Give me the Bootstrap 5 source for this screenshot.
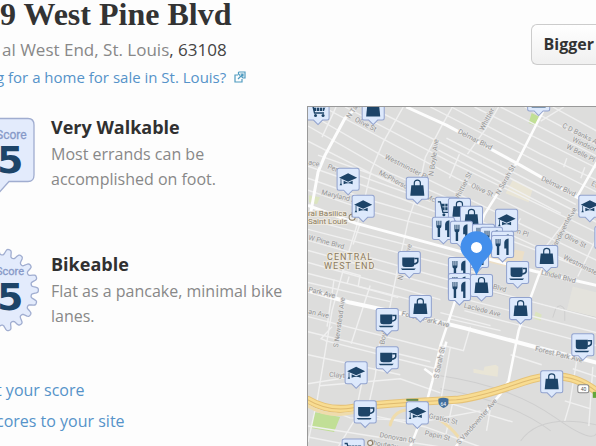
<!DOCTYPE html>
<html lang="en">
<head>
<meta charset="utf-8">
<meta name="viewport" content="width=device-width, initial-scale=1">
<title>West Pine Blvd</title>
<link href="https://cdn.jsdelivr.net/npm/bootstrap@5.3.0/dist/css/bootstrap.min.css" rel="stylesheet">
<style>
body { background:#fdfdfd; color:#333; font-family:"Open Sans","Noto Sans",sans-serif; font-size:16px; line-height:25px; }
a { color:#5593c9; text-decoration:none; }
.place-head { min-height:106px; }
.place-title { font-family:"Liberation Serif",serif; font-size:32px; line-height:28px; font-weight:700; color:#333; }
.place-area { font-size:17px; line-height:31px; margin-top:6px; padding-left:2px; color:#444; }
.place-area a, .score-note { color:#888; }
.place-promo { font-size:15px; line-height:24px; }
.bleed-start { margin-left:-4px; }
.btn-map { margin-top:24px; padding:7px 2px 7px 12px; font-size:16px; line-height:25px; font-weight:700; color:#333; border:1px solid #ccc; background:linear-gradient(#fff,#f0f0f0); }
.scores { flex:0 0 307px; }
.score-row { min-height:133px; padding-top:9px; }
.score-name { font-size:18px; line-height:25px; font-weight:700; margin-bottom:2px; color:#303030; }
.score-badge { flex:0 0 51px; height:96px; overflow:visible; }
.score-note { max-width:240px; }
.more-links { gap:6px; padding-top:2px; }
.map-box { min-height:340px; border:1px solid #999; border-width:1px 0 0 1px; background:#dddddc; }
.map-box svg { min-height:340px; }
</style>
</head>
<body>
<main class="d-flex flex-column min-vh-100 overflow-hidden">
  <header class="place-head d-flex justify-content-between align-items-start">
    <div>
      <h1 class="place-title m-0">9 West Pine Blvd</h1>
      <div class="place-area"><a href="#">al West End, St. Louis</a>, 63108</div>
      <a class="place-promo bleed-start d-flex align-items-center gap-2" href="#">g for a home for sale in St. Louis?
        <svg width="12" height="12" viewBox="0 0 12 12" fill="none" stroke="#4f9bc0" stroke-width="1.2" aria-hidden="true"><path d="M4 4H1V11H8V8M4.500 1H11V7H9L7.500 5.500M4.500 1V3L6 4.500M4 8L9 3M6.500 3H9V5.500"/></svg>
      </a>
    </div>
    <button class="btn btn-map rounded-end-0 border-end-0" type="button">Bigger</button>
  </header>

  <div class="d-flex flex-grow-1">
    <section class="scores">
      <div class="score-row d-flex mb-1">
        <svg class="score-badge" width="51" height="96" viewBox="0 115 51 96" role="img" aria-label="Walk Score">
          <path d="M-5 118.500H28Q34 118.500 34 125V175Q34 181.500 28 181.500H9L-5 197Z" fill="#e3ebfc" stroke="#a0add0" stroke-width="1.300"/>
          <text x="-4" y="139" font-family="Liberation Sans Narrow,Roboto,sans-serif" font-size="12" fill="#8799c8" stroke="#8799c8" stroke-width=".3">Score</text>
          <text x="-3" y="173" font-family="DejaVu Sans" font-weight="700" font-size="38" fill="#1d4468">5</text>
        </svg>
        <div><h2 class="score-name">Very Walkable</h2><p class="score-note m-0">Most errands can be accomplished on foot.</p></div>
      </div>
      <div class="score-row d-flex">
        <svg class="score-badge" width="51" height="96" viewBox="0 252 51 96" role="img" aria-label="Bike Score">
          <path id="gear" d="" fill="#e3ebfc" stroke="#a0add0" stroke-width="1.300" stroke-linejoin="round"/>
          <text x="-4" y="275" font-family="Liberation Sans Narrow,Roboto,sans-serif" font-size="11" fill="#8799c8" stroke="#8799c8" stroke-width=".3">Score</text>
          <text x="-3" y="310" font-family="DejaVu Sans" font-weight="700" font-size="38" fill="#1d4468">5</text>
        </svg>
        <div><h2 class="score-name">Bikeable</h2><p class="score-note m-0">Flat as a pancake, minimal bike lanes.</p></div>
      </div>
      <nav class="more-links bleed-start d-flex flex-column" aria-label="Score links">
        <a href="#">t your score</a>
        <a href="#">cores to your site</a>
      </nav>
    </section>

    <section class="map-box flex-grow-1 overflow-hidden d-flex" aria-label="Neighborhood map">
      <svg class="w-100" viewBox="308 107 288 339" preserveAspectRatio="xMinYMin slice" font-family="Roboto,sans-serif">
        <defs>
          <path id="plate" d="M-9 0H9Q11 0 11 2V20Q11 22 9 22H4.500L0 26.500L-4.500 22H-9Q-11 22-11 20V2Q-11 0-9 0Z" fill="#dde9fc" stroke="#91a2ce"/>
          <g id="bag"><use href="#plate"/><path d="M-6 8H6L7 18.500H-7Z" fill="#1d4468"/><path d="M-3 10V5.500Q-3 3 0 3T3 5.500V10" fill="none" stroke="#1d4468" stroke-width="1.200"/></g>
          <g id="cap"><use href="#plate"/><path d="M-9 9.500L0 5L9 9.500L0 13.500Z M-4.500 12.500L0 14.500L4.500 12.500V16Q0 14-4.500 16Z M-7.500 10.500V15L-8.500 17H-6L-6.700 15V11Z" fill="#1d4468"/></g>
          <g id="cup"><use href="#plate"/><path d="M-7 6H5V13Q5 15.500 2 15.500H-4Q-7 15.500-7 13Z M-8.500 17H6.500L5 18.500H-7Z" fill="#1d4468"/><path d="M5 7H8.500V10Q8 12 4.500 12.500" fill="none" stroke="#1d4468" stroke-width="1.500"/></g>
          <g id="fork"><use href="#plate"/><path d="M-7 3.500H-6V8H-5V3.500H-4V8H-3V3.500H-2V9Q-2 10.500-3.300 11V19.500H-5.700V11Q-7 10.500-7 9Z M6 3V19.500H3.700V13H1.700V7Q2 3.500 6 3Z" fill="#1d4468"/></g>
          <g id="cart"><use href="#plate"/><path d="M-8.500 4.500H-6L-3.500 15H6" fill="none" stroke="#1d4468" stroke-width="1.300"/><path d="M-5.500 6.500H8L6 13H-4Z" fill="#1d4468"/><path d="M-4 9.500H7M-1.500 6V13M1.500 6V13M4.500 6V13" stroke="#dde9fc" stroke-width=".7"/><circle cx="-2.500" cy="17.500" r="1.500" fill="#1d4468"/><circle cx="5" cy="17.500" r="1.500" fill="#1d4468"/></g>
        </defs>

        <g fill="#e9e5d6">
          <path d="M512 180L532 189L528 202L505 193Z M473 368L483 370L484 366L495 364L498 366L497 376L484 374L473 372Z"/>
          <path d="M472 242L524 251L519 269L470 258Z" fill="#ecdfc7"/>
          <path d="M572 286L596 292V318L566 310Z" fill="#e4e3dd"/>
        </g>
        <g fill="#c1df96">
          <path d="M531 113L539 117L536 126L528 123Z M314 411L340 416L334 431L311 427Z"/>
          <path d="M535 311L541 314L540 320L533 318Z M545 269L555 273L552 277L545 275Z M309 195L320 197L317 204L309 202Z" fill="#dbe4bf"/>
        </g>
        <g fill="none" stroke="#cecece">
          <path d="M440 375Q510 385 555 417T596 425M520 440Q540 412 596 424M440 388Q510 400 550 430M475 288L596 317M552 317L555 308Q560 302 564 309V320"/>
        </g>

        <!-- side streets -->
        <g fill="none" stroke="#f0f0f0" stroke-width="1.400">
          <path d="M323 107L456 178L596 246M345 107L450 162L596 232M370 107L596 222M308 113L400 166L500 214L596 260M308 126L390 173L480 212M308 141L380 178L470 216L570 262M330 165L430 201M308 166L400 198L596 273M308 178L370 200L440 220M318 155L400 184M308 190L370 211L450 232"/>
          <path d="M430 107L596 192M451 107L540 154L596 180M474 107L596 168M500 107L596 156M524 107L596 145M552 107L596 131M446 138L575 204M438 150L560 213"/>
          <path d="M308 219L470 261M308 229L475 272M308 240L465 284M308 250L450 289M308 262L440 299M308 273L430 304M308 282L390 301M462 283L596 318M470 300L596 332M464 310L596 345M448 318L500 330M440 312L490 325"/>
          <path d="M308 316L440 350M308 331L430 361M308 354L400 374M325 340L440 369M308 383L345 377M320 385L400 378L440 392M308 425L440 446M308 436L360 446M370 414L425 426L480 446"/>
          <path d="M403 107L383 142L371 170L363 205L357 224L343 270L332 310L317 400L308 441M452 107L440 128L425 157L418 190L408 220L397 270L388 315L379 345L375 375L366 415M336 107L322 137M498 107L485 129L467 154M470 171L459 196M459 154L449 178M563 107L540 121M520 218L500 250M570 214L546 245M596 237L577 276M566 158L563 167M584 167L580 178M360 223L353 244M334 279L327 326M370 285L351 343M342 270L360 275L358 286L398 297M349 276L347 283M332 326L321 338L326 340M470 326L463 350L440 344M510 354L541 364M576 359L569 403L564 420M592 366L588 425M564 400L590 408M572 368L596 376M452 403L445 436M448 402L512 421M490 407L486 430M362 380L354 420L338 446M450 346L441 396"/>
          <path d="M308 401L350 417L425 420L480 410"/>
        </g>
        <!-- main roads -->
        <g fill="none" stroke="#fdfdfd" stroke-width="3" stroke-linejoin="round">
          <path d="M357 107L345 118L325 155L318 172L311 211M406 107L446 125L516 163L576 197L596 207M308 205L356 223L456 250L535 271L596 285" />
          <path d="M308 290L350 302L430 319L466 328L530 345L596 362" stroke-width="4"/>
          <path d="M596 162L576 197M543 110L516 163L484 214L466 265L450 315L440 345L432 380L424 410L410 446M546 262L538 275L518 330L508 380L500 393L455 446M424 368L436 377L446 341" stroke-width="2.500"/>
        </g>
        <!-- highway -->
        <g fill="none" stroke-linecap="round">
          <path d="M308 399Q328 411 352 407T456 399Q480 396 523 381T596 391" stroke="#e6c378" stroke-width="8"/>
          <path d="M308 399Q328 411 352 407T456 399Q480 396 523 381T596 391" stroke="#f8dc91" stroke-width="6"/>
          <path d="M308 399Q328 411 352 407T456 399Q480 396 523 381T596 391" stroke="#dfba70"/>
          <path d="M390 424Q394 408 412 409Q440 413 458 436M308 405Q330 419 360 410" stroke="#efdcac" stroke-width="3"/>
        </g>
        <path d="M406 399H418" stroke="#648a50" stroke-width="2"/>
        <path d="M438 398Q443 396 448 398V403Q447 406 443 407Q438 405 438 401Z" fill="#426f9d"/><text x="440" y="405" font-size="5" fill="#fff">64</text>
        <rect x="577" y="384" width="11" height="8" rx="2" fill="#fff" stroke="#888"/><text x="580" y="390" font-size="5" fill="#555">40</text>
        <rect x="592" y="391" width="8" height="6" fill="#62a73b"/>

        <!-- street names -->
        <g font-size="7" fill="#959595" stroke="#e6e6e6" stroke-width="1.500" paint-order="stroke">
          <text transform="translate(354 121) rotate(27)">Olive St</text>
          <text transform="translate(350 119) rotate(-57)">N Tay</text>
          <text transform="translate(384 158) rotate(27)">Westminster Pl</text>
          <text transform="translate(378 174) rotate(28)">McPherson</text>
          <text transform="translate(433 176) rotate(-82)">N Boyle Ave</text>
          <text transform="translate(308 164) rotate(12)">ace</text>
          <text transform="translate(327 168) rotate(22)">Per</text>
          <text transform="translate(321 194) rotate(14)">Maryland Ave</text>
          <text transform="translate(425 198) rotate(25)">McP</text>
          <text transform="translate(457 133) rotate(27)">Delmar Blvd</text>
          <text transform="translate(483 131) rotate(-63)">Whittier St</text>
          <text transform="translate(499 195) rotate(-61)">N Sarah St</text>
          <text transform="translate(457 202) rotate(-63)">Whittier St</text>
          <text transform="translate(470 187) rotate(24)">Olive St</text>
          <text transform="translate(540 180) rotate(26)">Delmar Blvd</text>
          <text transform="translate(561 127) rotate(27)">C D Banks Ave</text>
          <text transform="translate(571 141) rotate(25)">Windsor Pl</text>
          <text transform="translate(565 148) rotate(27)">W Belle Pl</text>
          <text transform="translate(590 185) rotate(25)">Evans</text>
          <text transform="translate(571 219) rotate(-64)">Ave</text>
          <text transform="translate(554 250) rotate(-63)">Vandeventer</text>
          <text transform="translate(563 237) rotate(27)">Olive St</text>
          <text transform="translate(562 258) rotate(27)">Westminster Pl</text>
          <text transform="translate(540 274) rotate(14)">Lindell Blvd</text>
          <text transform="translate(492 288) rotate(15)">Blvd</text>
          <text transform="translate(516 233) rotate(18)">n Pl</text>
          <text transform="translate(463 307) rotate(14)">Laclede Ave</text>
          <text transform="translate(308 239) rotate(15)">W Pine Blvd</text>
          <text transform="translate(308 291) rotate(14)">Park Ave</text>
          <text transform="translate(308 313) rotate(12)">an Ave</text>
          <text transform="translate(401 315) rotate(14)">Forest Park Ave</text>
          <text transform="translate(534 350) rotate(14)">Forest Park Ave</text>
          <text transform="translate(338 347) rotate(-82)">S Newstead Ave</text>
          <text transform="translate(384 344) rotate(-79)">Boyle Ave</text>
          <text transform="translate(402 280) rotate(-75)">N Boyle Ave</text>
          <text transform="translate(438 378) rotate(-78)">S Sarah St</text>
          <text transform="translate(329 376) rotate(4)">Clayton</text>
          <text transform="translate(428 417) rotate(13)">Gratiot St</text>
          <text transform="translate(424 434) rotate(13)">Papin St</text>
          <text transform="translate(379 436) rotate(10)">Donovan Dr</text>
          <text transform="translate(368 443) rotate(10)">Chouteau</text>
          <text transform="translate(459 444) rotate(-49)">S Vandeventer Ave</text>
        </g>
        <g fill="#8b7b60" stroke="#eee9df" stroke-width="2" paint-order="stroke">
          <text x="308" y="216" font-size="8">ral Basilica</text><text x="308" y="224" font-size="8">Saint Louis</text>
          <text x="327" y="260" font-size="9" letter-spacing="1">CENTRAL</text><text x="324" y="269" font-size="9" letter-spacing="1">WEST END</text>
        </g>
        <g fill="#eee" stroke="#8b7b60"><circle cx="352" cy="217" r="3"/><circle cx="370" cy="442" r="2.500"/><path d="M352 212V217"/></g>

        <!-- places -->
        <use href="#cart" x="318" y="98"/><use href="#bag" x="373" y="98"/><use href="#bag" x="538" y="89"/>
        <use href="#cap" x="348" y="168"/><use href="#cap" x="363" y="195"/><use href="#bag" x="417" y="177"/>
        <use href="#cart" x="446" y="197"/><use href="#bag" x="459" y="198"/><use href="#bag" x="471" y="206"/><use href="#cap" x="506" y="209"/>
        <use href="#fork" x="443" y="217"/><use href="#fork" x="461" y="221"/>
        <use href="#fork" x="483" y="224"/><use href="#fork" x="491" y="227"/><use href="#fork" x="502" y="231"/><use href="#fork" x="502" y="235"/>
        <use href="#fork" x="477" y="245"/><use href="#fork" x="459" y="257"/><use href="#fork" x="459" y="273"/><use href="#fork" x="459" y="278"/><use href="#bag" x="481" y="274"/>
        <use href="#cup" x="517" y="261"/><use href="#bag" x="546" y="245"/><use href="#bag" x="520" y="297"/>
        <use href="#cap" x="589" y="195"/><use href="#bag" x="605" y="226"/>
        <use href="#cup" x="409" y="251"/><use href="#bag" x="420" y="295"/><use href="#cup" x="387" y="308"/><use href="#cup" x="387" y="346"/>
        <use href="#cap" x="356" y="361"/><use href="#cup" x="365" y="400"/><use href="#cap" x="417" y="401"/><use href="#cart" x="353" y="438"/>
        <use href="#bag" x="551" y="370"/><use href="#cup" x="582" y="333"/>
        <path d="M476 275Q472 264 464 256Q460 251 460 247A16 16 0 0 1 492 247Q492 251 488 256Q480 264 476 275Z" fill="#438fec"/>
        <circle cx="476" cy="247" r="5.500" fill="#fff"/>
      </svg>
    </section>
  </div>
</main>
<script>
// Toothed outline of the bike badge: 20 rounded teeth around a centre left of the edge.
(() => {
  const cx = -4, cy = 290, pts = [];
  for (let i = 0; i <= 360; i++) {
    const a = i * Math.PI / 180;
    const r = 39 + 3.5 * Math.tanh(2 * Math.sin(a * 20 + 1.5));
    pts.push((cx + r * Math.cos(a)).toFixed(1) + ' ' + (cy + r * Math.sin(a)).toFixed(1));
  }
  document.getElementById('gear').setAttribute('d', 'M' + pts.join('L') + 'Z');
})();
</script>
<script src="https://cdn.jsdelivr.net/npm/bootstrap@5.3.0/dist/js/bootstrap.bundle.min.js"></script>
</body>
</html>
